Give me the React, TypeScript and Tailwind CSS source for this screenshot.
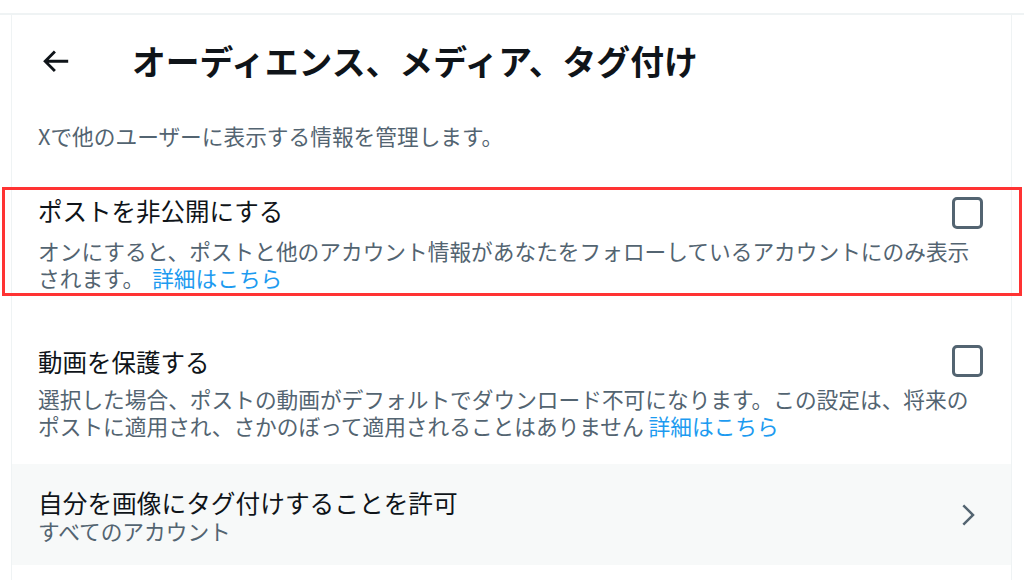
import React from "react";

function Checkbox() {
  return <div className="w-[31px] h-[32px] rounded-[5px] border-[3px] border-[#536471] shrink-0" />;
}

function BackArrow() {
  return (
    <svg viewBox="0 0 24 24" className="w-[34.5px] h-[34.5px] fill-[#0f1419] shrink-0">
      <path d="M7.414 13l5.043 5.04-1.414 1.42L3.586 12l7.457-7.46 1.414 1.42L7.414 11H21v2H7.414z" />
    </svg>
  );
}

function Chevron() {
  return (
    <svg viewBox="0 0 24 24" className="w-[30px] h-[30px] fill-[#536471] shrink-0">
      <path d="M14.586 12L7.543 4.96l1.414-1.42L17.414 12l-8.457 8.46-1.414-1.42L14.586 12z" />
    </svg>
  );
}

export default function App() {
  return (
    <div className="w-[1024px] h-[580px] bg-white overflow-hidden font-['Noto_Sans_CJK_JP','Noto_Sans',sans-serif]">
      <div className="h-[15px] border-b-2 border-[#eff3f4]" />
      <div className="ml-[11px] w-[1001px] h-[565px] border-x border-[#eff3f4]">
        {/* header */}
        <div className="h-[92px] flex items-center pl-[26px]">
          <BackArrow />
          <h1 className="ml-[59.5px] text-[33.8px] leading-[40px] font-bold text-[#0f1419]">
            オーディエンス、メディア、タグ付け
          </h1>
        </div>

        <div className="px-[26px] pt-[14px] pb-[36px] text-[21.7px] leading-[30px] text-[#536471]">
          Xで他のユーザーに表示する情報を管理します。
        </div>

        {/* protect posts */}
        <div className="relative h-[109px] pl-[26px] pr-[28px] pt-[8px]">
          <div className="absolute -left-[10px] -right-[11px] top-0 bottom-0 border-[3px] border-[#ff3333]" />
          <div className="flex items-start justify-between">
            <span className="text-[24.5px] leading-[32px] text-[#0f1419]">ポストを非公開にする</span>
            <div className="mt-[2px]">
              <Checkbox />
            </div>
          </div>
          <p className="mt-[9px] text-[21.7px] leading-[26.5px] text-[#536471]">
            オンにすると、ポストと他のアカウント情報があなたをフォローしているアカウントにのみ表示されます。{" "}
            <span className="ml-[3px] text-[#1d9bf0]">詳細はこちら</span>
          </p>
        </div>

        {/* protect videos */}
        <div className="h-[168px] pl-[26px] pr-[28px] pt-[50px]">
          <div className="flex items-start justify-between">
            <span className="text-[24.5px] leading-[32px] text-[#0f1419]">動画を保護する</span>
            <div className="-mt-[1px]">
              <Checkbox />
            </div>
          </div>
          <p className="mt-[8px] text-[21.7px] leading-[26.5px] text-[#536471]">
            選択した場合、ポストの動画がデフォルトでダウンロード不可になります。この設定は、将来のポストに適用され、さかのぼって適用されることはありません{" "}
            <span className="text-[#1d9bf0]">詳細はこちら</span>
          </p>
        </div>

        {/* photo tagging */}
        <div className="h-[101px] bg-[#f7f9f9] flex items-center justify-between pl-[26px] pr-[28px]">
          <div className="flex flex-col">
            <span className="text-[24.7px] leading-[32px] text-[#0f1419]">自分を画像にタグ付けすることを許可</span>
            <span className="text-[21.7px] leading-[26px] text-[#536471]">すべてのアカウント</span>
          </div>
          <Chevron />
        </div>
      </div>
    </div>
  );
}
